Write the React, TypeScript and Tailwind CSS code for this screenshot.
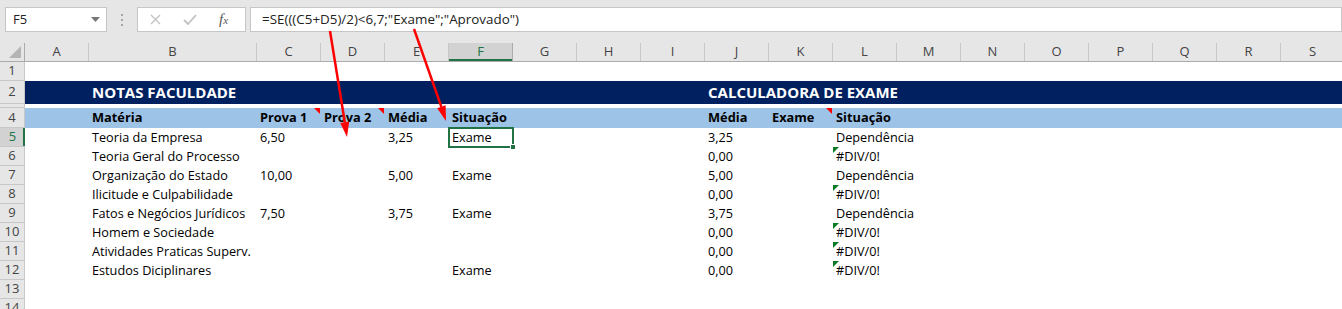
import React from "react";

type Col = { l: string; w: number };

const cols: Col[] = [
  { l: "A", w: 64 },
  { l: "B", w: 168 },
  ...["C", "D", "E", "F", "G", "H", "I", "J", "K", "L", "M", "N", "O", "P", "Q", "R", "S"].map((l) => ({ l, w: 64 })),
];

type Row = {
  n: number;
  h: number;
  kind?: "title" | "head";
  cells?: Record<string, string>;
};

const rows: Row[] = [
  { n: 1, h: 19 },
  { n: 2, h: 23, kind: "title", cells: { B: "NOTAS FACULDADE", J: "CALCULADORA DE EXAME" } },
  { n: 3, h: 4 },
  {
    n: 4,
    h: 20,
    kind: "head",
    cells: { B: "Matéria", C: "Prova 1", D: "Prova 2", E: "Média", F: "Situação", J: "Média", K: "Exame", L: "Situação" },
  },
  { n: 5, h: 19, cells: { B: "Teoria da Empresa", C: "6,50", E: "3,25", F: "Exame", J: "3,25", L: "Dependência" } },
  { n: 6, h: 19, cells: { B: "Teoria Geral do Processo", J: "0,00", L: "#DIV/0!" } },
  { n: 7, h: 19, cells: { B: "Organização do Estado", C: "10,00", E: "5,00", F: "Exame", J: "5,00", L: "Dependência" } },
  { n: 8, h: 19, cells: { B: "Ilicitude e Culpabilidade", J: "0,00", L: "#DIV/0!" } },
  { n: 9, h: 19, cells: { B: "Fatos e Negócios Jurídicos", C: "7,50", E: "3,75", F: "Exame", J: "3,75", L: "Dependência" } },
  { n: 10, h: 19, cells: { B: "Homem e Sociedade", J: "0,00", L: "#DIV/0!" } },
  { n: 11, h: 19, cells: { B: "Atividades Praticas Superv.", J: "0,00", L: "#DIV/0!" } },
  { n: 12, h: 19, cells: { B: "Estudos Diciplinares", F: "Exame", J: "0,00", L: "#DIV/0!" } },
  { n: 13, h: 19 },
  { n: 14, h: 19 },
];

const commentCells = ["4C", "4D", "4K"];

const Toolbar = () => (
  <div className="h-[43px] bg-[#e6e6e6] flex items-start pt-[7px] pl-[5px]">
    <div className="w-[102px] h-[25px] bg-white border border-[#c6c6c6] flex items-center justify-between pl-[7px] pr-[6px]">
      <span className="text-[13px] text-[#222]">F5</span>
      <svg width="9" height="5" viewBox="0 0 9 5">
        <polygon points="0,0 9,0 4.5,5" fill="#777" />
      </svg>
    </div>
    <div className="w-[30px] h-[25px] flex flex-col items-center justify-center gap-[3px]">
      <span className="w-[2px] h-[2px] bg-[#a6a6a6]" />
      <span className="w-[2px] h-[2px] bg-[#a6a6a6]" />
      <span className="w-[2px] h-[2px] bg-[#a6a6a6]" />
    </div>
    <div className="w-[109px] h-[25px] bg-white border border-[#c6c6c6] flex items-center pl-[12px] gap-[22px]">
      <svg width="11" height="11" viewBox="0 0 11 11">
        <path d="M1 1 L10 10 M10 1 L1 10" stroke="#c2c2c2" strokeWidth="1.4" />
      </svg>
      <svg width="14" height="11" viewBox="0 0 14 11">
        <path d="M1 6 L5 10 L13 1" stroke="#c2c2c2" strokeWidth="1.8" fill="none" />
      </svg>
      <span className="font-['Liberation_Serif',serif] italic text-[15px] text-[#555] leading-none">
        f<span className="text-[11px]">x</span>
      </span>
    </div>
    <div className="ml-[4px] flex-1 h-[25px] bg-white border border-[#c6c6c6] flex items-center pl-[11px]">
      <span className="text-[13.4px] text-[#222]">=SE(((C5+D5)/2)&lt;6,7;"Exame";"Aprovado")</span>
    </div>
  </div>
);

const ColumnHeader = () => (
  <div className="flex h-[19px] bg-[#e6e6e6] border-b border-[#ababab]">
    <div className="w-[25px] shrink-0 border-r border-[#ababab] relative">
      <svg className="absolute right-[3px] bottom-[3px]" width="12" height="12" viewBox="0 0 12 12">
        <polygon points="12,0 12,12 0,12" fill="#b4b4b4" />
      </svg>
    </div>
    {cols.map((c) => {
      const sel = c.l === "F";
      return (
        <div
          key={c.l}
          style={{ width: c.w }}
          className={
            sel
              ? "shrink-0 flex items-center justify-center text-[13px] bg-[#d2d2d2] text-[#217346] border-r border-[#ababab] shadow-[inset_0_-2px_0_#217346]"
              : "shrink-0 flex items-center justify-center text-[13px] text-[#444] border-r border-[#c8c8c8]"
          }
        >
          {c.l}
        </div>
      );
    })}
  </div>
);

const SheetRow = ({ row }: { row: Row }) => {
  const bg = row.kind === "title" ? "bg-[#002060]" : row.kind === "head" ? "bg-[#9dc3e6]" : "bg-white";
  const sel = row.n === 5;
  return (
    <div className="flex" style={{ height: row.h }}>
      <div
        className={
          sel
            ? "w-[25px] shrink-0 flex items-center justify-center text-[13px] text-[#217346] bg-[#d2d2d2] border-b border-[#c8c8c8] shadow-[inset_-2px_0_0_#217346]"
            : "w-[25px] shrink-0 flex items-center justify-center text-[13px] text-[#444] bg-[#e6e6e6] border-b border-[#c8c8c8] border-r border-[#ababab]"
        }
      >
        {row.h > 10 ? row.n : ""}
      </div>
      <div className={`flex flex-1 ${bg}`}>
        {cols.map((c) => {
          const text = row.cells?.[c.l];
          const key = `${row.n}${c.l}`;
          const isSel = key === "5F";
          const errTri = c.l === "L" && text === "#DIV/0!";
          return (
            <div key={c.l} style={{ width: c.w }} className="shrink-0 relative flex items-center pl-[3px]">
              {text && (
                <span
                  className={
                    row.kind === "title"
                      ? "text-[15px] font-bold text-white whitespace-nowrap"
                      : row.kind === "head"
                        ? "text-[12.8px] font-bold text-black whitespace-nowrap"
                        : "text-[12.7px] text-black whitespace-nowrap"
                  }
                >
                  {text}
                </span>
              )}
              {commentCells.includes(key) && (
                <svg className="absolute right-[1px] top-0" width="6" height="6" viewBox="0 0 6 6">
                  <polygon points="0,0 6,0 6,6" fill="#ff0000" />
                </svg>
              )}
              {errTri && (
                <svg className="absolute left-0 top-0" width="6" height="6" viewBox="0 0 6 6">
                  <polygon points="0,0 6,0 0,6" fill="#0b7a24" />
                </svg>
              )}
              {isSel && (
                <>
                  <div className="absolute -left-[1px] -top-[1px] -right-[1px] -bottom-[1px] border-2 border-[#217346]" />
                  <div className="absolute -right-[3px] -bottom-[3px] w-[6px] h-[6px] bg-[#217346] border border-white" />
                </>
              )}
            </div>
          );
        })}
      </div>
    </div>
  );
};

const Arrows = () => (
  <svg className="absolute left-0 top-0 pointer-events-none" width="1342" height="309">
    <line x1="330" y1="31" x2="344.8" y2="122.2" stroke="#ff0000" strokeWidth="2.5" />
    <polygon points="347,137 349.2,121.5 340.3,122.9" fill="#ff0000" />
    <line x1="414" y1="29" x2="441.4" y2="106.8" stroke="#ff0000" strokeWidth="2.5" />
    <polygon points="446,121 445.6,105.3 437.2,108.3" fill="#ff0000" />
  </svg>
);

export default function App() {
  return (
    <div className="relative w-[1342px] h-[309px] overflow-hidden bg-white font-['Open_Sans','Noto_Sans',sans-serif]">
      <Toolbar />
      <ColumnHeader />
      {rows.map((r) => (
        <SheetRow key={r.n} row={r} />
      ))}
      <Arrows />
    </div>
  );
}
